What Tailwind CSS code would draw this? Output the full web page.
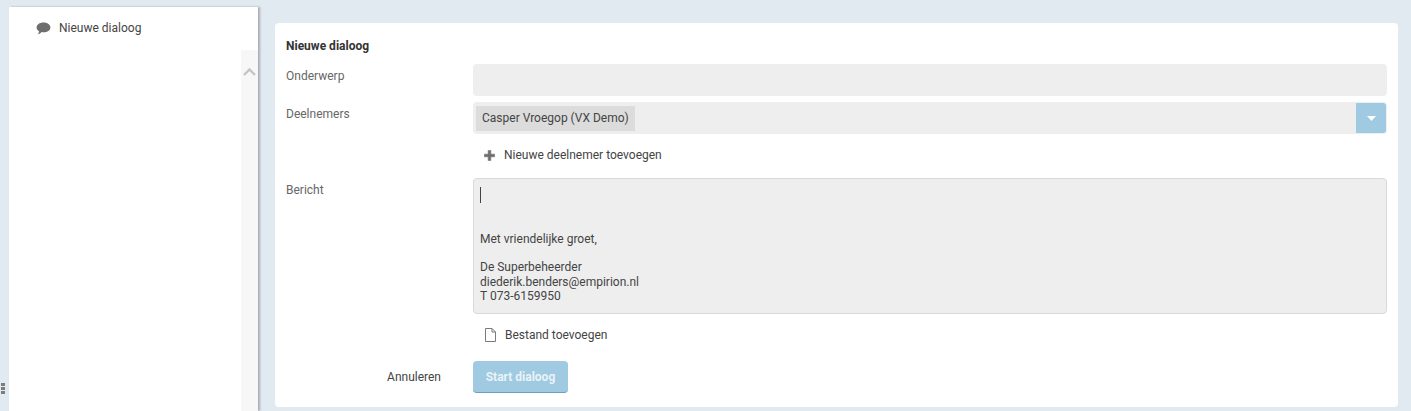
<!DOCTYPE html>
<html lang="en">
<head>
    <meta charset="UTF-8">
    <meta name="viewport" content="width=device-width, initial-scale=1.0">
    <title>Nieuwe dialoog</title>
    <script src="https://cdn.jsdelivr.net/npm/@tailwindcss/browser@4"></script>
</head>
<body class="bg-[#e1e9f1] font-['Roboto',sans-serif] text-[12px] text-[#333] overflow-hidden">
    <div class="relative flex h-[411px] w-[1411px] pl-[9px]">
        <!-- resize handle -->
        <div class="absolute left-[1px] top-[383px] flex flex-col gap-[1px]">
            <span class="block h-[3px] w-[4px] bg-[#7d7d7d]"></span>
            <span class="block h-[3px] w-[4px] bg-[#7d7d7d]"></span>
            <span class="block h-[3px] w-[4px] bg-[#7d7d7d]"></span>
        </div>

        <!-- sidebar -->
        <aside class="mt-[7px] flex h-[404px] w-[249px] flex-col bg-white shadow-[2px_0_2px_#a9aeb3]">
            <div class="flex h-[43px] items-start pl-[27px] pt-[14px]">
                <svg class="mt-[1px] h-[14px] w-[15px]" viewBox="0 0 15 14"><path fill="#6e6e6e" d="M7.5 0.5C3.5 0.5 0.6 2.7 0.6 5.4c0 1.6 1 3 2.5 3.8-.1 1.2-.6 2.2-1.3 3.1 1.5-.2 2.9-1.1 3.9-2.2.6.1 1.2.2 1.8.2 4 0 6.9-2.2 6.9-4.9S11.5.5 7.5.5z"/></svg>
                <span class="ml-[8px] leading-[14px] text-[#444]">Nieuwe dialoog</span>
            </div>
            <div class="flex flex-1 justify-end">
                <div class="w-[17px] bg-[#f7f7f7] pt-[17px]">
                    <svg class="ml-[2px] h-[9px] w-[13px]" viewBox="0 0 13 9"><path fill="none" stroke="#c4c4c4" stroke-width="2.4" d="M1 8l5.5-5.5L12 8"/></svg>
                </div>
            </div>
        </aside>

        <!-- main card -->
        <main class="ml-[17px] mt-[23px] h-[384px] w-[1123px] rounded-[4px] bg-white pl-[11px] pr-[11px] pt-[16px]">
            <h1 class="h-[25px] font-bold leading-[14px] text-[#333]">Nieuwe dialoog</h1>

            <div class="grid grid-cols-[187px_914px]">
                <label class="pt-[4px] leading-[16px] text-[#666]">Onderwerp</label>
                <div class="h-[32px] rounded-[4px] bg-[#eeeeee]"></div>

                <label class="mt-[6px] pt-[4px] leading-[16px] text-[#666]">Deelnemers</label>
                <div class="mt-[6px] flex h-[32px] items-center justify-between rounded-[4px] bg-[#eeeeee] pl-[3px] pr-[1px]">
                    <span class="flex h-[25px] w-[159px] items-center bg-[#dcdcdc] pl-[6px] text-[#444]">Casper Vroegop (VX Demo)</span>
                    <span class="flex h-[30px] w-[30px] items-center justify-center rounded-r-[3px] bg-[#9fcae1]">
                        <svg class="h-[5px] w-[9px]" viewBox="0 0 9 5"><path fill="#fff" d="M0 0h9L4.5 5z"/></svg>
                    </span>
                </div>

                <div></div>
                <div class="flex h-[42px] items-center pl-[11px]">
                    <svg class="h-[11px] w-[11px]" viewBox="0 0 11 11"><path fill="#6e6e6e" stroke="#6e6e6e" stroke-width=".6" stroke-linejoin="round" d="M4.2.4h2.6v3.8h3.8v2.6H6.8v3.8H4.2V6.8H.4V4.2h3.8z"/></svg>
                    <span class="ml-[9px] text-[#444]">Nieuwe deelnemer toevoegen</span>
                </div>

                <label class="mt-[2px] pt-[4px] leading-[16px] text-[#666]">Bericht</label>
                <div class="mt-[2px] h-[136px] rounded-[4px] border border-[#d9d9d9] bg-[#eeeeee] pl-[6px] pt-[8px] leading-[14.5px] text-[#444]">
                    <div class="h-[16px] w-[1px] bg-[#444]"></div>
                    <p class="mt-[29px]">Met vriendelijke groet,</p>
                    <p class="mt-[13.5px]">De Superbeheerder</p>
                    <p>diederik.benders@empirion.nl</p>
                    <p class="-mt-[0.5px]">T 073-6159950</p>
                </div>

                <div></div>
                <div class="flex h-[42px] items-center pl-[12px]">
                    <svg class="h-[14px] w-[11px]" viewBox="0 0 11 14"><path fill="none" stroke="#7a7a7a" d="M.5.5h6.5l3.500 3.500v9.500H.5zM7 .5V4h3.500"/></svg>
                    <span class="ml-[9px] text-[#444]">Bestand toevoegen</span>
                </div>

                <div class="mt-[5px] flex h-[32px] items-center justify-end pr-[32px] text-[#444]">Annuleren</div>
                <div class="mt-[5px]">
                    <button class="h-[32px] w-[95px] rounded-[4px] border-b border-[#6f9fb8] bg-[#9fcae1] font-bold text-[#e9f3f8]">Start dialoog</button>
                </div>
            </div>
        </main>
    </div>
</body>
</html>
